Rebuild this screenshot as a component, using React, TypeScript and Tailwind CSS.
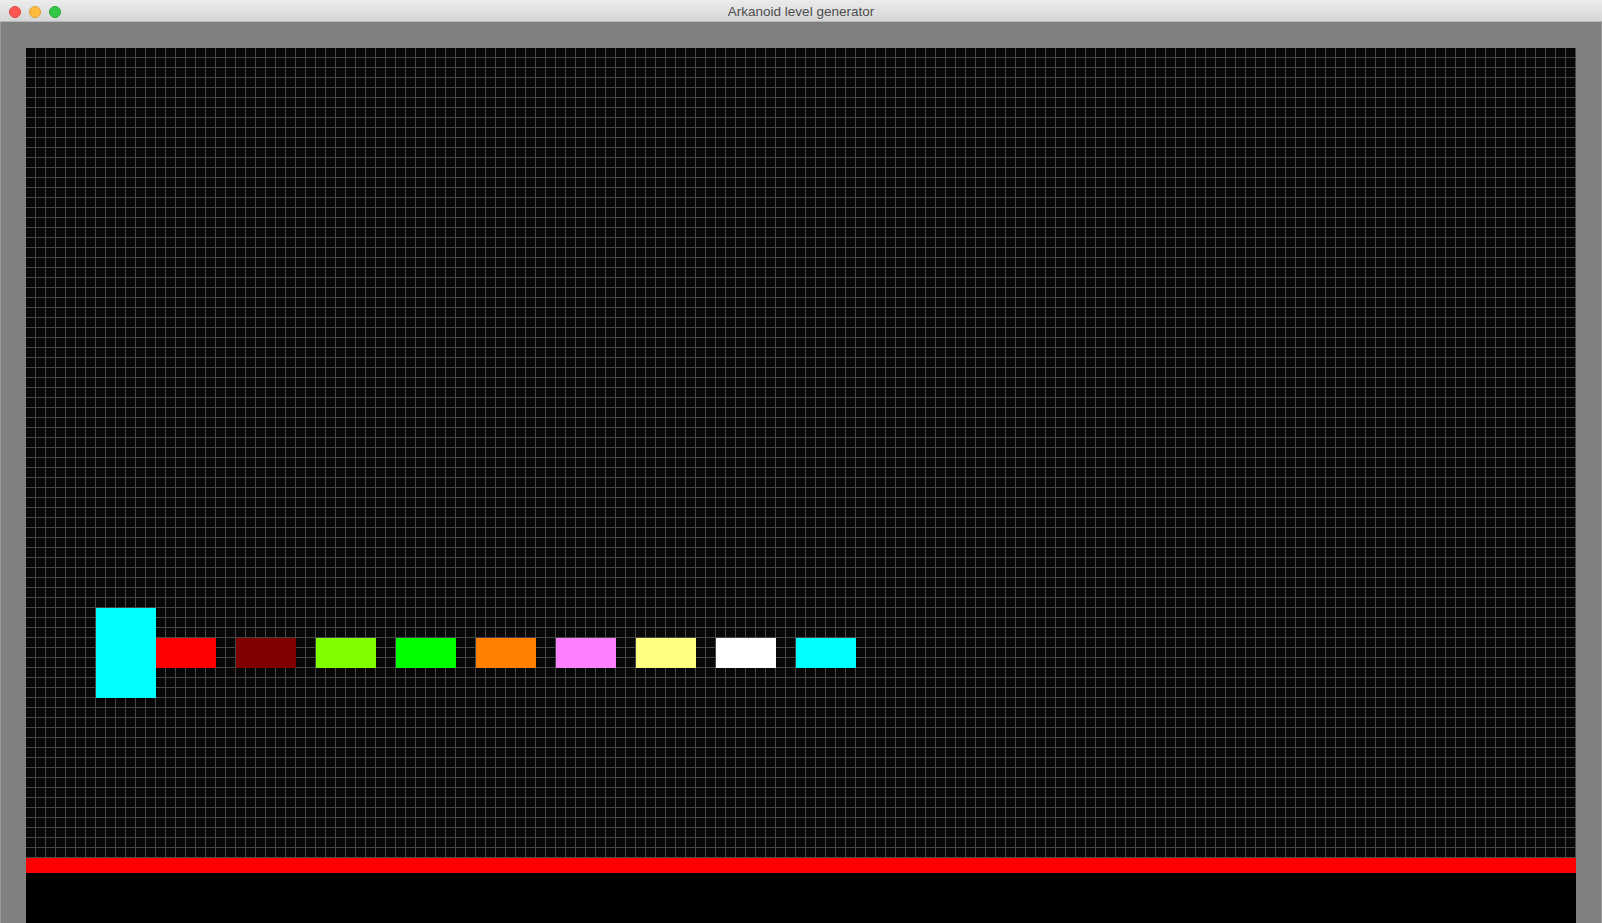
import React from 'react';

// level bricks, in px relative to the grid origin
const bricks = [
  { x: 70, y: 560, w: 60, h: 90, color: 'bg-[#00ffff]' }, // paddle-ish tall piece
  { x: 130, y: 590, w: 60, h: 30, color: 'bg-[#ff0000]' },
  { x: 210, y: 590, w: 60, h: 30, color: 'bg-[#800000]' },
  { x: 290, y: 590, w: 60, h: 30, color: 'bg-[#80ff00]' },
  { x: 370, y: 590, w: 60, h: 30, color: 'bg-[#00ff00]' },
  { x: 450, y: 590, w: 60, h: 30, color: 'bg-[#ff8000]' },
  { x: 530, y: 590, w: 60, h: 30, color: 'bg-[#ff80ff]' },
  { x: 610, y: 590, w: 60, h: 30, color: 'bg-[#ffff80]' },
  { x: 690, y: 590, w: 60, h: 30, color: 'bg-[#ffffff]' },
  { x: 770, y: 590, w: 60, h: 30, color: 'bg-[#00ffff]' },
];

function TitleBar() {
  return (
    <div className="relative h-[22px] shrink-0 flex items-center justify-center pt-[2px] bg-[linear-gradient(to_bottom,#ececec,#d6d6d6)] border-b border-[#b8b8b8]">
      <div className="absolute left-[9px] top-[6px] flex gap-[8px]">
        <span className="w-[12px] h-[12px] rounded-full bg-[#fc5753] border border-[#df4744]" />
        <span className="w-[12px] h-[12px] rounded-full bg-[#fdbc40] border border-[#de9f34]" />
        <span className="w-[12px] h-[12px] rounded-full bg-[#33c748] border border-[#27aa35]" />
      </div>
      <span className="text-[13.5px] text-[#4d4d4d] leading-none font-['Liberation_Sans',Arial,sans-serif]">
        Arkanoid level generator
      </span>
    </div>
  );
}

export default function App() {
  return (
    <div className="w-full h-[923px] flex flex-col overflow-hidden bg-[#808080]">
      <TitleBar />
      <div className="flex-1 flex flex-col px-[25px] pt-[26px] border-x border-[#9a9a9a]">
        <div className="relative h-[810px] shrink-0 bg-[#080808] bg-[linear-gradient(to_right,transparent_9px,#474747_9px),linear-gradient(to_bottom,transparent_9px,#474747_9px)] bg-[size:10px_10px]">
          {bricks.map((b, i) => (
            <div
              key={i}
              className={`absolute ${b.color}`}
              style={{ left: b.x, top: b.y, width: b.w, height: b.h }}
            />
          ))}
        </div>
        <div className="h-[15px] shrink-0 bg-[#ff0000]" />
        <div className="flex-1 bg-black" />
      </div>
    </div>
  );
}
